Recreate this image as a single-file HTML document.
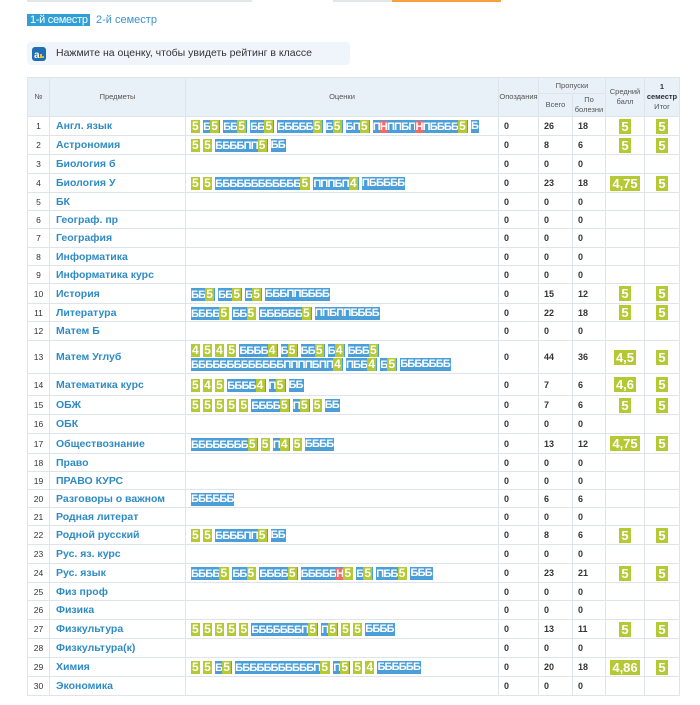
<!DOCTYPE html>
<html><head><meta charset="utf-8"><style>
*{margin:0;padding:0;box-sizing:border-box}
body{width:700px;height:705px;background:#fff;font-family:"Liberation Sans",sans-serif;position:relative;overflow:hidden}
.bar{position:absolute;top:0;height:2px}
.tab1{position:absolute;left:27px;top:14px;width:63px;height:12px;background:#2f9fd6;color:#fff;font-size:11px;line-height:12px;padding-left:3px;white-space:nowrap;letter-spacing:-0.3px}
.tab2{position:absolute;left:96px;top:14px;color:#3a92cc;font-size:11px;line-height:12px;white-space:nowrap}
.info{position:absolute;left:27px;top:42px;width:323px;height:23px;background:#f0f5fb;border-radius:4px}
.ico{position:absolute;left:5px;top:5px;width:14px;height:14px;background:#1f6fb5;border-radius:3px}
.info span{position:absolute;left:29px;top:5px;font-size:10.5px;color:#333;white-space:nowrap}
table{position:absolute;left:27px;top:77px;border-collapse:collapse;table-layout:fixed;width:652px}
td,th{border:1px solid #dfe4ea;font-size:9px;color:#333;padding:0}
th{background:#e8f0f8;font-weight:normal;font-size:7.5px;color:#555;text-align:center;line-height:10px}
td.n{text-align:center;font-size:8.5px}
td.s{font-weight:bold;color:#2f8bc4;font-size:10.5px;padding-left:6px;white-space:nowrap}
td.v{font-weight:bold;font-size:9px;padding-left:5px}
td.g{padding-left:5px;line-height:14px}
.g i,.g>b{display:inline-block;height:13px;line-height:13px;font-style:normal;font-weight:bold;font-size:11px;letter-spacing:-0.8px;color:#fff;margin-right:3px;vertical-align:middle}
.g i{background:#4a9fd8;padding-right:0.8px}
.g b{background:#b4c934;padding:0 1.4px 0 1px;font-weight:bold;font-size:12px;letter-spacing:0}
.g i b{display:inline-block;height:13px;line-height:13px}
.g u{text-decoration:none;background:#f06a6a}
td.a{text-align:center}
.a b{display:inline-block;background:#b4c934;color:#fff;font-size:13px;line-height:15px;height:15px;padding:0 2px}
</style></head><body>
<div class="bar" style="left:27px;width:225px;background:#e3e7ec"></div>
<div class="bar" style="left:333px;width:59px;background:#e3e7ec"></div>
<div class="bar" style="left:392px;width:109px;background:#f6a13a"></div>
<div class="tab1">1-й семестр</div>
<div class="tab2">2-й семестр</div>
<div class="info"><div class="ico"><svg width="14" height="14"><text x="2" y="11" font-size="10" font-weight="bold" fill="#fff" font-family="Liberation Sans">a</text><rect x="8" y="7" width="2" height="4" fill="#f2c12e"/><rect x="10" y="9" width="2" height="2" fill="#b4c934"/></svg></div><span>Нажмите на оценку, чтобы увидеть рейтинг в классе</span></div>
<table>
<colgroup><col style="width:22px"><col style="width:136px"><col style="width:313px"><col style="width:40px"><col style="width:34px"><col style="width:33px"><col style="width:39px"><col style="width:35px"></colgroup>
<tr style="height:16px"><th rowspan="2">№</th><th rowspan="2">Предметы</th><th rowspan="2">Оценки</th><th rowspan="2">Опоздания</th><th colspan="2">Пропуски</th><th rowspan="2">Средний<br>балл</th><th rowspan="2"><b style="color:#333">1<br>семестр</b><br>Итог</th></tr>
<tr style="height:23px"><th>Всего</th><th>По<br>болезни</th></tr>
<tr style="height:19px"><td class="n">1</td><td class="s">Англ. язык</td><td class="g"><b>5</b><i>Б<b>5</b></i><i>ББ<b>5</b></i><i>ББ<b>5</b></i><i>БББББ<b>5</b></i><i>Б<b>5</b></i><i>БП<b>5</b></i><i>П<u>Н</u>ППБП<u>Н</u>ПББББ<b>5</b></i><i>Б</i></td><td class="v">0</td><td class="v">26</td><td class="v">18</td><td class="a"><b>5</b></td><td class="a"><b>5</b></td></tr>
<tr style="height:19px"><td class="n">2</td><td class="s">Астрономия</td><td class="g"><b>5</b><b>5</b><i>ББББПП<b>5</b></i><i>ББ</i></td><td class="v">0</td><td class="v">8</td><td class="v">6</td><td class="a"><b>5</b></td><td class="a"><b>5</b></td></tr>
<tr style="height:19px"><td class="n">3</td><td class="s">Биология б</td><td></td><td class="v">0</td><td class="v">0</td><td class="v">0</td><td></td><td></td></tr>
<tr style="height:19px"><td class="n">4</td><td class="s">Биология У</td><td class="g"><b>5</b><b>5</b><i>ББББББББББББ<b>5</b></i><i>ПППБП<b>4</b></i><i>ПБББББ</i></td><td class="v">0</td><td class="v">23</td><td class="v">18</td><td class="a"><b>4,75</b></td><td class="a"><b>5</b></td></tr>
<tr style="height:18px"><td class="n">5</td><td class="s">БК</td><td></td><td class="v">0</td><td class="v">0</td><td class="v">0</td><td></td><td></td></tr>
<tr style="height:18px"><td class="n">6</td><td class="s">Географ. пр</td><td></td><td class="v">0</td><td class="v">0</td><td class="v">0</td><td></td><td></td></tr>
<tr style="height:19px"><td class="n">7</td><td class="s">География</td><td></td><td class="v">0</td><td class="v">0</td><td class="v">0</td><td></td><td></td></tr>
<tr style="height:18px"><td class="n">8</td><td class="s">Информатика</td><td></td><td class="v">0</td><td class="v">0</td><td class="v">0</td><td></td><td></td></tr>
<tr style="height:18px"><td class="n">9</td><td class="s">Информатика курс</td><td></td><td class="v">0</td><td class="v">0</td><td class="v">0</td><td></td><td></td></tr>
<tr style="height:20px"><td class="n">10</td><td class="s">История</td><td class="g"><i>ББ<b>5</b></i><i>ББ<b>5</b></i><i>Б<b>5</b></i><i>БББППББББ</i></td><td class="v">0</td><td class="v">15</td><td class="v">12</td><td class="a"><b>5</b></td><td class="a"><b>5</b></td></tr>
<tr style="height:18px"><td class="n">11</td><td class="s">Литература</td><td class="g"><i>ББББ<b>5</b></i><i>ББ<b>5</b></i><i>ББББББ<b>5</b></i><i>ППБППББББ</i></td><td class="v">0</td><td class="v">22</td><td class="v">18</td><td class="a"><b>5</b></td><td class="a"><b>5</b></td></tr>
<tr style="height:19px"><td class="n">12</td><td class="s">Матем Б</td><td></td><td class="v">0</td><td class="v">0</td><td class="v">0</td><td></td><td></td></tr>
<tr style="height:33px"><td class="n">13</td><td class="s">Матем Углуб</td><td class="g"><b>4</b><b>5</b><b>4</b><b>5</b><i>ББББ<b>4</b></i><i>Б<b>5</b></i><i>ББ<b>5</b></i><i>Б<b>4</b></i><i>БББ<b>5</b></i><i>БББББББББББББППППБПП<b>4</b></i><i>ПББ<b>4</b></i><i>Б<b>5</b></i><i>БББББББ</i></td><td class="v">0</td><td class="v">44</td><td class="v">36</td><td class="a"><b>4,5</b></td><td class="a"><b>5</b></td></tr>
<tr style="height:22px"><td class="n">14</td><td class="s">Математика курс</td><td class="g"><b>5</b><b>4</b><b>5</b><i>ББББ<b>4</b></i><i>П<b>5</b></i><i>ББ</i></td><td class="v">0</td><td class="v">7</td><td class="v">6</td><td class="a"><b>4,6</b></td><td class="a"><b>5</b></td></tr>
<tr style="height:19px"><td class="n">15</td><td class="s">ОБЖ</td><td class="g"><b>5</b><b>5</b><b>5</b><b>5</b><b>5</b><i>ББББ<b>5</b></i><i>П<b>5</b></i><b>5</b><i>ББ</i></td><td class="v">0</td><td class="v">7</td><td class="v">6</td><td class="a"><b>5</b></td><td class="a"><b>5</b></td></tr>
<tr style="height:19px"><td class="n">16</td><td class="s">ОБК</td><td></td><td class="v">0</td><td class="v">0</td><td class="v">0</td><td></td><td></td></tr>
<tr style="height:20px"><td class="n">17</td><td class="s">Обществознание</td><td class="g"><i>ББББББББ<b>5</b></i><b>5</b><i>П<b>4</b></i><b>5</b><i>ББББ</i></td><td class="v">0</td><td class="v">13</td><td class="v">12</td><td class="a"><b>4,75</b></td><td class="a"><b>5</b></td></tr>
<tr style="height:18px"><td class="n">18</td><td class="s">Право</td><td></td><td class="v">0</td><td class="v">0</td><td class="v">0</td><td></td><td></td></tr>
<tr style="height:18px"><td class="n">19</td><td class="s">ПРАВО КУРС</td><td></td><td class="v">0</td><td class="v">0</td><td class="v">0</td><td></td><td></td></tr>
<tr style="height:18px"><td class="n">20</td><td class="s">Разговоры о важном</td><td class="g"><i>ББББББ</i></td><td class="v">0</td><td class="v">6</td><td class="v">6</td><td></td><td></td></tr>
<tr style="height:18px"><td class="n">21</td><td class="s">Родная литерат</td><td></td><td class="v">0</td><td class="v">0</td><td class="v">0</td><td></td><td></td></tr>
<tr style="height:19px"><td class="n">22</td><td class="s">Родной русский</td><td class="g"><b>5</b><b>5</b><i>ББББПП<b>5</b></i><i>ББ</i></td><td class="v">0</td><td class="v">8</td><td class="v">6</td><td class="a"><b>5</b></td><td class="a"><b>5</b></td></tr>
<tr style="height:19px"><td class="n">23</td><td class="s">Рус. яз. курс</td><td></td><td class="v">0</td><td class="v">0</td><td class="v">0</td><td></td><td></td></tr>
<tr style="height:19px"><td class="n">24</td><td class="s">Рус. язык</td><td class="g"><i>ББББ<b>5</b></i><i>ББ<b>5</b></i><i>ББББ<b>5</b></i><i>БББББ<u>Н</u><b>5</b></i><i>Б<b>5</b></i><i>ПББ<b>5</b></i><i>БББ</i></td><td class="v">0</td><td class="v">23</td><td class="v">21</td><td class="a"><b>5</b></td><td class="a"><b>5</b></td></tr>
<tr style="height:18px"><td class="n">25</td><td class="s">Физ проф</td><td></td><td class="v">0</td><td class="v">0</td><td class="v">0</td><td></td><td></td></tr>
<tr style="height:19px"><td class="n">26</td><td class="s">Физика</td><td></td><td class="v">0</td><td class="v">0</td><td class="v">0</td><td></td><td></td></tr>
<tr style="height:19px"><td class="n">27</td><td class="s">Физкультура</td><td class="g"><b>5</b><b>5</b><b>5</b><b>5</b><b>5</b><i>БББББББП<b>5</b></i><i>П<b>5</b></i><b>5</b><b>5</b><i>ББББ</i></td><td class="v">0</td><td class="v">13</td><td class="v">11</td><td class="a"><b>5</b></td><td class="a"><b>5</b></td></tr>
<tr style="height:19px"><td class="n">28</td><td class="s">Физкультура(к)</td><td></td><td class="v">0</td><td class="v">0</td><td class="v">0</td><td></td><td></td></tr>
<tr style="height:19px"><td class="n">29</td><td class="s">Химия</td><td class="g"><b>5</b><b>5</b><i>Б<b>5</b></i><i>БББББББББББП<b>5</b></i><i>П<b>5</b></i><b>5</b><b>4</b><i>ББББББ</i></td><td class="v">0</td><td class="v">20</td><td class="v">18</td><td class="a"><b>4,86</b></td><td class="a"><b>5</b></td></tr>
<tr style="height:19px"><td class="n">30</td><td class="s">Экономика</td><td></td><td class="v">0</td><td class="v">0</td><td class="v">0</td><td></td><td></td></tr>
</table>
</body></html>
